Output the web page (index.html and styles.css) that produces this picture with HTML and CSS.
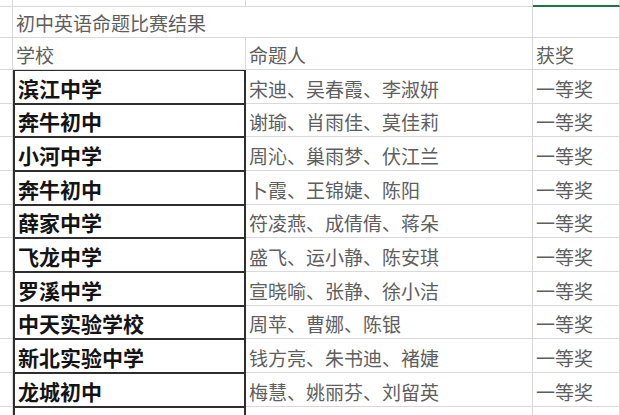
FILE: index.html
```html
<!DOCTYPE html>
<html lang="zh-CN">
<head>
<meta charset="utf-8">
<title>初中英语命题比赛结果</title>
<link rel="stylesheet" href="styles.css">
</head>
<body>
<div class="sheet">
  <div class="c rh"></div><div class="c"></div><div class="c"></div><div class="c sel"></div>

  <div class="c rh"></div><div class="c t span2">初中英语命题比赛结果</div><div class="c"></div>

  <div class="c rh"></div><div class="c t">学校</div><div class="c t">命题人</div><div class="c t">获奖</div>

  <div class="c rh"></div><div class="c s">滨江中学</div><div class="c t">宋迪、吴春霞、李淑妍</div><div class="c t">一等奖</div>
  <div class="c rh"></div><div class="c s">奔牛初中</div><div class="c t">谢瑜、肖雨佳、莫佳莉</div><div class="c t">一等奖</div>
  <div class="c rh"></div><div class="c s">小河中学</div><div class="c t">周沁、巢雨梦、伏江兰</div><div class="c t">一等奖</div>
  <div class="c rh"></div><div class="c s">奔牛初中</div><div class="c t">卜霞、王锦婕、陈阳</div><div class="c t">一等奖</div>
  <div class="c rh"></div><div class="c s">薛家中学</div><div class="c t">符凌燕、成倩倩、蒋朵</div><div class="c t">一等奖</div>
  <div class="c rh"></div><div class="c s">飞龙中学</div><div class="c t">盛飞、运小静、陈安琪</div><div class="c t">一等奖</div>
  <div class="c rh"></div><div class="c s">罗溪中学</div><div class="c t">宣晓喻、张静、徐小洁</div><div class="c t">一等奖</div>
  <div class="c rh"></div><div class="c s">中天实验学校</div><div class="c t">周苹、曹娜、陈银</div><div class="c t">一等奖</div>
  <div class="c rh"></div><div class="c s">新北实验中学</div><div class="c t">钱方亮、朱书迪、褚婕</div><div class="c t">一等奖</div>
  <div class="c rh"></div><div class="c s">龙城初中</div><div class="c t">梅慧、姚丽芬、刘留英</div><div class="c t">一等奖</div>
  <div class="c rh"></div><div class="c s">孟河中学</div><div class="c t">何璐、黄昂、王程锋</div><div class="c t">一等奖</div>
</div>
</body>
</html>
```

FILE: styles.css
```css
html, body {
  margin: 0;
  padding: 0;
  background: #ffffff;
  overflow: hidden;
}

.sheet {
  display: grid;
  width: 620px;
  height: 415px;
  overflow: hidden;
  grid-template-columns: 13px 233px 287px 1fr;
  grid-template-rows: 7px 31px 32px repeat(11, 33.67px);
  font-family: "Noto Sans CJK SC", sans-serif;
}

.c {
  box-sizing: border-box;
  border-right: 1px solid #d9d9d9;
  border-bottom: 1px solid #d9d9d9;
  display: flex;
  align-items: flex-end;
  padding-left: 3px;
  white-space: nowrap;
  overflow: hidden;
  min-width: 0;
}

.rh {
  padding: 0;
}

.span2 {
  grid-column: span 2;
}

.t {
  font-size: 19px;
  line-height: 28px;
  color: #5e5e5e;
}

.s {
  font-size: 21px;
  line-height: 30px;
  font-weight: bold;
  color: #141414;
  border: 1px solid #2e2e2e;
  border-left-width: 2px;
  border-right-width: 2px;
}

.sel {
  border-bottom: 2px solid #217346;
}
```
